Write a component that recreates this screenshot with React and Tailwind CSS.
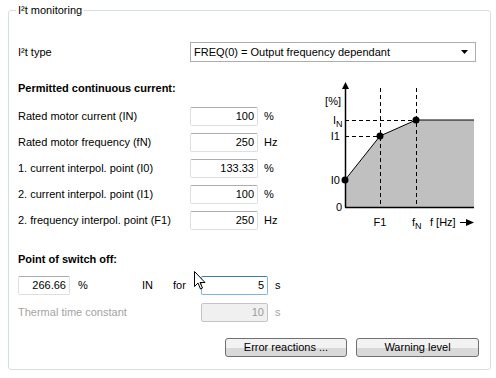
import React from 'react';

const rows = [
  { label: 'Rated motor current (IN)', value: '100', unit: '%' },
  { label: 'Rated motor frequency (fN)', value: '250', unit: 'Hz' },
  { label: '1. current interpol. point (I0)', value: '133.33', unit: '%' },
  { label: '2. current interpol. point (I1)', value: '100', unit: '%' },
  { label: '2. frequency interpol. point (F1)', value: '250', unit: 'Hz' },
];

function Field({ value, className = '', focused = false, disabled = false }) {
  return (
    <div
      className={`h-[19px] flex items-center justify-end pr-[3px] border rounded-[2px] ${
        focused
          ? 'border-[#7eb4ea] border-t-[#3d7bad]'
          : disabled
          ? 'border-[#c4c4c4] bg-[#f0f0f0] text-[#9a9a9a]'
          : 'border-[#dcdfe4] border-t-[#abadb3] bg-white'
      } ${className}`}
    >
      {value}
    </div>
  );
}

function Chart() {
  return (
    <svg width="172" height="150" viewBox="0 0 172 150" className="shrink-0">
      <polygon points="37,125 37,98 72,54 108,38 166,38 166,125" fill="#c0c0c0" />
      <polyline points="37,98 72,54 108,38 166,38" fill="none" stroke="#000" strokeWidth="1" />
      <g stroke="#000" strokeWidth="1" strokeDasharray="4 3" fill="none">
        <line x1="72.5" y1="6" x2="72.5" y2="125" />
        <line x1="108.5" y1="6" x2="108.5" y2="125" />
        <line x1="37" y1="38.5" x2="108" y2="38.5" />
        <line x1="37" y1="54.5" x2="72" y2="54.5" />
      </g>
      {/* axes */}
      <line x1="37.5" y1="4" x2="37.5" y2="125.5" stroke="#000" strokeWidth="1.5" />
      <line x1="37" y1="125.5" x2="166" y2="125.5" stroke="#000" strokeWidth="1.5" />
      <polygon points="37.5,0 34,7 41,7" fill="#000" />
      <circle cx="37" cy="98" r="3.5" fill="#000" />
      <circle cx="72" cy="54" r="3.5" fill="#000" />
      <circle cx="108" cy="38" r="3.5" fill="#000" />
      <g fontFamily="Liberation Sans, Arial, sans-serif" fontSize="11" fill="#000">
        <text x="33" y="23" textAnchor="end">[%]</text>
        <text x="25" y="42">I<tspan fontSize="9" dy="3">N</tspan></text>
        <text x="32" y="58" textAnchor="end">I1</text>
        <text x="32" y="102" textAnchor="end">I0</text>
        <text x="34" y="129" textAnchor="end">0</text>
        <text x="72" y="144" textAnchor="middle">F1</text>
        <text x="104" y="144">f<tspan fontSize="9" dy="3">N</tspan></text>
        <text x="122" y="144">f [Hz]</text>
      </g>
      <line x1="152" y1="140.5" x2="160" y2="140.5" stroke="#000" strokeWidth="1" />
      <polygon points="166,140.5 158,137 158,144" fill="#000" />
    </svg>
  );
}

export default function App() {
  return (
    <div className="relative w-[496px] h-[378px] bg-white text-[11px] leading-[13px] text-black font-['Liberation_Sans',Arial,sans-serif] pt-[4px] px-[8px]">
      <fieldset className="w-[480px] h-[366px] border border-[#d5dfe5] rounded-[3px] pl-[9px] pr-[10px]">
        <legend className="ml-[-2px] px-[2px]">I²t monitoring</legend>

        {/* I2t type */}
        <div className="flex items-center mt-[25px]">
          <span className="w-[172px]">I²t type</span>
          <div className="w-[286px] h-[20px] flex items-center justify-between border border-[#abadb3] bg-white pl-[3px] pr-[7px]">
            <span>FREQ(0) = Output frequency dependant</span>
            <svg width="7" height="4" viewBox="0 0 7 4"><polygon points="0,0 7,0 3.5,4" fill="#000" /></svg>
          </div>
        </div>

        {/* Permitted continuous current */}
        <div className="flex mt-[20px]">
          <div className="w-[290px]">
            <div className="font-bold">Permitted continuous current:</div>
            <div className="flex flex-col gap-[7px] mt-[12px]">
              {rows.map(r => (
                <div key={r.label} className="flex items-center">
                  <span className="w-[172px]">{r.label}</span>
                  <Field value={r.value} className="w-[68px]" />
                  <span className="ml-[6px]">{r.unit}</span>
                </div>
              ))}
            </div>
          </div>
          <Chart />
        </div>

        {/* Point of switch off */}
        <div className="font-bold mt-[21px]">Point of switch off:</div>
        <div className="flex items-center mt-[10px]">
          <Field value="266.66" className="w-[52px]" />
          <span className="ml-[8px] w-[64px]">%</span>
          <span className="w-[31px]">IN</span>
          <span className="w-[28px]">for</span>
          <Field value="5" focused className="w-[67px] bg-white" />
          <span className="ml-[7px]">s</span>
        </div>
        <div className="flex items-center mt-[8px] text-[#a3a3a3]">
          <span className="w-[183px]">Thermal time constant</span>
          <Field value="10" disabled className="w-[67px]" />
          <span className="ml-[7px]">s</span>
        </div>

        <div className="flex justify-end gap-[9px] mt-[16px] pr-[1px]">
          <button className="w-[122px] h-[19px] border border-[#707070] rounded-[3px] bg-gradient-to-b from-[#f2f2f2] from-50% to-[#d9d9d9] to-50%">
            Error reactions ...
          </button>
          <button className="w-[123px] h-[19px] border border-[#707070] rounded-[3px] bg-gradient-to-b from-[#f2f2f2] from-50% to-[#d9d9d9] to-50%">
            Warning level
          </button>
        </div>
      </fieldset>

      {/* mouse pointer */}
      <svg className="absolute left-[194px] top-[271px]" width="12" height="19" viewBox="0 0 12 19">
        <path d="M0.5,0.5 L0.5,15.5 L4,12 L6.5,18 L8.5,17 L6,11.5 L11,11.5 Z" fill="#fff" stroke="#000" strokeWidth="1" />
      </svg>
    </div>
  );
}
